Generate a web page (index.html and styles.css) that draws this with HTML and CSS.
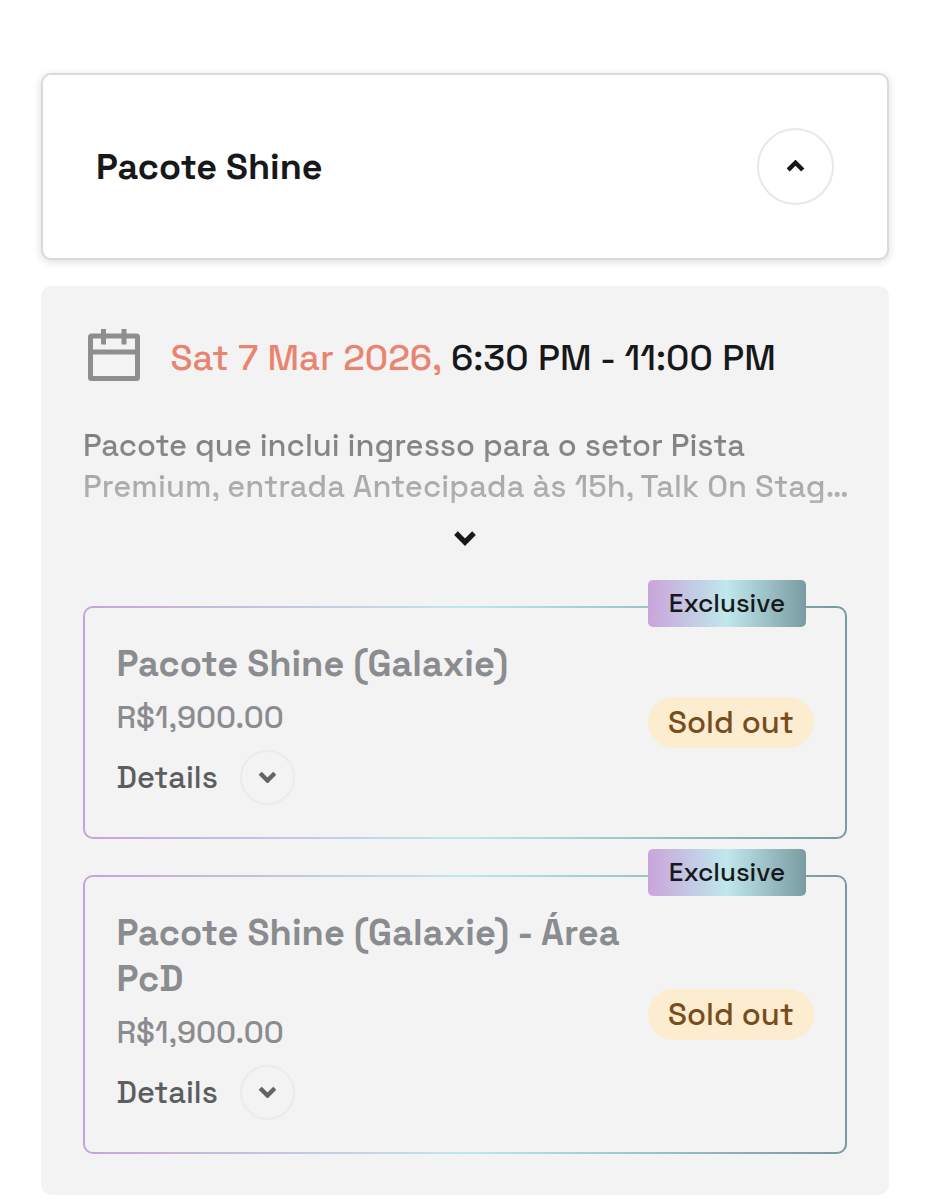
FILE: index.html
```html
<!DOCTYPE html>
<html lang="en">
<head>
<meta charset="utf-8">
<title>Pacote Shine</title>
<link rel="stylesheet" href="styles.css">
</head>
<body>
<main class="page">
  <header class="group">
    <h1 class="group-title">Pacote Shine</h1>
    <button class="round round-large" aria-label="Collapse">
      <svg class="chevron" width="18" height="12" viewBox="0 0 18 12"><path d="M1.200 10 8.500 2.700l7.300 7.300"/></svg>
    </button>
  </header>

  <section class="panel">
    <div class="schedule">
      <svg class="calendar" width="52" height="54" viewBox="0 0 52 54">
        <rect x="2.500" y="8" width="47" height="42.500" rx="1"/>
        <path d="M2.500 24h47M15.500 1v15.500M36 1v15.500"/>
      </svg>
      <p class="when"><span class="date">Sat 7 Mar 2026,</span><span class="time">6:30 PM - 11:00 PM</span></p>
    </div>

    <p class="description">Pacote que inclui ingresso para o setor Pista<br><span class="truncated">Premium, entrada Antecipada às 15h, Talk On Stag…</span></p>
    <button class="expand" aria-label="Show more">
      <svg class="chevron" width="22" height="15" viewBox="0 0 22 15"><path d="M2 2.200l9 9 9-9"/></svg>
    </button>

    <div class="tickets">
      <article class="ticket">
        <span class="badge">Exclusive</span>
        <div class="info">
          <h2 class="name">Pacote Shine (Galaxie)</h2>
          <p class="price">R$1,900.00</p>
          <div class="details">
            <span class="details-label">Details</span>
            <button class="round round-small" aria-label="Show details">
              <svg class="chevron" width="18" height="12" viewBox="0 0 18 12"><path d="M2.200 2.200 9.500 9.500l7.300-7.300"/></svg>
            </button>
          </div>
        </div>
        <span class="status">Sold out</span>
      </article>

      <article class="ticket">
        <span class="badge">Exclusive</span>
        <div class="info">
          <h2 class="name name-long">Pacote Shine (Galaxie) - Área PcD</h2>
          <p class="price">R$1,900.00</p>
          <div class="details">
            <span class="details-label">Details</span>
            <button class="round round-small" aria-label="Show details">
              <svg class="chevron" width="18" height="12" viewBox="0 0 18 12"><path d="M2.200 2.200 9.500 9.500l7.300-7.300"/></svg>
            </button>
          </div>
        </div>
        <span class="status">Sold out</span>
      </article>
    </div>
  </section>
</main>
</body>
</html>
```

FILE: styles.css
```css
* { box-sizing: border-box; }

body {
  margin: 0;
  background: #fff;
  color: #17181a;
  font-family: "Space Grotesk", Inter, "Liberation Sans", sans-serif;
  font-size: 31px;
  font-weight: 500;
}

h1, h2, p { margin: 0; }

button { padding: 0; border: 0; background: none; color: inherit; }

.page {
  height: 1200px;
  padding: 73px 41px 0;
  overflow: hidden;
}

.group {
  display: flex;
  align-items: center;
  justify-content: space-between;
  height: 186.500px;
  padding: 0 53px;
  border: 2px solid #dadada;
  border-radius: 10px;
  background: #fff;
  box-shadow: 0 2px 8px rgba(0, 0, 0, .14);
}

.group-title {
  padding-top: 2px;
  font-size: 36px;
  font-weight: 600;
  line-height: 46px;
}

.round {
  display: flex;
  flex: none;
  align-items: center;
  justify-content: center;
  border: 2px solid #e5e8ee;
  border-radius: 50%;
}

.round-large { width: 77px; height: 77px; }

.round-small {
  width: 55px;
  height: 55px;
  border-color: #e9ebf2;
}

.chevron {
  display: block;
  fill: none;
  stroke: currentColor;
  stroke-width: 4.400;
}

.panel {
  height: 909px;
  margin-top: 26px;
  padding: 42.500px 42px 0;
  border-radius: 10px;
  background: #f3f3f3;
}

.schedule {
  display: flex;
  align-items: center;
  gap: 30.500px;
  padding-left: 5px;
}

.calendar {
  flex: none;
  fill: none;
  stroke: #8d8e90;
  stroke-width: 5;
}

.when {
  display: flex;
  gap: 9px;
  padding-top: 6px;
  font-size: 36.200px;
  line-height: 46px;
  white-space: nowrap;
}

.date { color: #e98470; }

.time { letter-spacing: .080px; }

.description {
  margin: 42.500px -4px 0 0;
  font-size: 30.900px;
  line-height: 41.500px;
  white-space: nowrap;
  background: linear-gradient(#7a7b7c, #8b8c8e 45%, #a6a7a9 60%, #b4b5b6);
  -webkit-background-clip: text;
  background-clip: text;
  color: transparent;
}

.truncated { letter-spacing: .1px; }

.expand {
  display: flex;
  align-items: center;
  justify-content: center;
  width: 100%;
  height: 62px;
}

.expand .chevron { stroke-width: 5.200; }

.tickets {
  display: grid;
  gap: 36.500px;
  margin-top: 36.500px;
}

.ticket {
  position: relative;
  display: flex;
  align-items: center;
  justify-content: space-between;
  padding: 33px 31px 32px 31.500px;
  border: 2px solid transparent;
  border-radius: 10px;
  background:
    linear-gradient(#f3f3f3, #f3f3f3) padding-box,
    linear-gradient(90deg, #c8a2d8, #bfe7eb 50%, #77999f) border-box;
}

.badge {
  position: absolute;
  top: -28px;
  right: 39px;
  width: 158px;
  height: 46.500px;
  border-radius: 5px;
  background: linear-gradient(90deg, #caa4db, #bfe8ec 50%, #7a9ba1);
  font-size: 26px;
  line-height: 47px;
  text-align: center;
}

.name {
  color: #8b8c8f;
  font-size: 36.200px;
  font-weight: 700;
  line-height: 46px;
}

.name-long { letter-spacing: .05px; }

.price {
  margin-top: 9.500px;
  color: #8b8c8f;
  line-height: 40px;
}

.details {
  display: flex;
  align-items: center;
  gap: 22px;
  margin-top: 13px;
  color: #5c5d5f;
}

.details-label { font-size: 30.700px; }

.details .chevron { color: #626366; }

.status {
  flex: none;
  width: 166px;
  height: 51px;
  border-radius: 26px;
  background: #fcecd0;
  color: #784d1c;
  line-height: 51.500px;
  text-align: center;
}
```
